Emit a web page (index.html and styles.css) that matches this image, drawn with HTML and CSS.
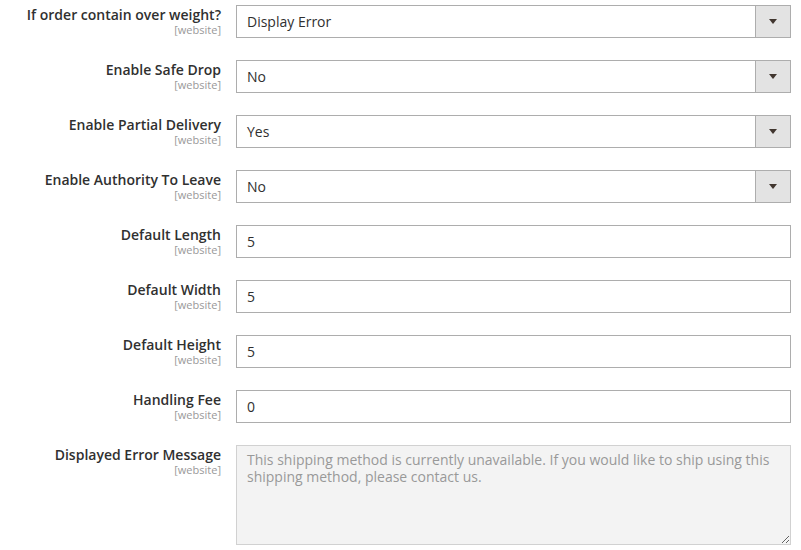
FILE: index.html
```html
<!DOCTYPE html>
<html>
<head>
<meta charset="utf-8">
<link rel="stylesheet" href="styles.css">
</head>
<body>
<div class="form">
  <div class="row">
    <div class="label"><span class="name">If order contain over weight?</span><span class="scope">[website]</span></div>
    <div class="control"><div class="select"><span class="value">Display Error</span><span class="arrow"></span></div></div>
  </div>
  <div class="row">
    <div class="label"><span class="name">Enable Safe Drop</span><span class="scope">[website]</span></div>
    <div class="control"><div class="select"><span class="value">No</span><span class="arrow"></span></div></div>
  </div>
  <div class="row">
    <div class="label"><span class="name">Enable Partial Delivery</span><span class="scope">[website]</span></div>
    <div class="control"><div class="select"><span class="value">Yes</span><span class="arrow"></span></div></div>
  </div>
  <div class="row">
    <div class="label"><span class="name">Enable Authority To Leave</span><span class="scope">[website]</span></div>
    <div class="control"><div class="select"><span class="value">No</span><span class="arrow"></span></div></div>
  </div>
  <div class="row">
    <div class="label"><span class="name">Default Length</span><span class="scope">[website]</span></div>
    <div class="control"><div class="input">5</div></div>
  </div>
  <div class="row">
    <div class="label"><span class="name">Default Width</span><span class="scope">[website]</span></div>
    <div class="control"><div class="input">5</div></div>
  </div>
  <div class="row">
    <div class="label"><span class="name">Default Height</span><span class="scope">[website]</span></div>
    <div class="control"><div class="input">5</div></div>
  </div>
  <div class="row">
    <div class="label"><span class="name">Handling Fee</span><span class="scope">[website]</span></div>
    <div class="control"><div class="input">0</div></div>
  </div>
  <div class="row">
    <div class="label"><span class="name">Displayed Error Message</span><span class="scope">[website]</span></div>
    <div class="control"><textarea class="textarea" readonly>This shipping method is currently unavailable. If you would like to ship using this shipping method, please contact us.</textarea></div>
  </div>
</div>
</body>
</html>
```
FILE: styles.css
```css
html, body {
  margin: 0;
  padding: 0;
  background: #fff;
}
body {
  font-family: "Open Sans", "Liberation Sans", sans-serif;
  color: #303030;
}
.form {
  display: flex;
  flex-direction: column;
  gap: 22px;
  padding: 5px 10px 0 0;
}
.row {
  display: grid;
  grid-template-columns: 221px 1fr;
  column-gap: 15px;
}
.label {
  display: flex;
  flex-direction: column;
  align-items: flex-end;
  text-align: right;
  padding-top: 1px;
}
.name {
  font-size: 14px;
  font-weight: 600;
  line-height: 17px;
  color: #303030;
}
.scope {
  font-size: 11px;
  line-height: 14px;
  color: #999;
}
.select, .input {
  box-sizing: border-box;
  height: 33px;
  border: 1px solid #adadad;
  background: #fff;
  font-size: 14px;
  line-height: 31px;
  color: #303030;
  display: flex;
}
.input {
  padding: 0 10px;
}
.select .value {
  flex: 1;
  padding: 0 10px;
}
.arrow {
  width: 34px;
  border-left: 1px solid #adadad;
  background: #e3e3e3;
  display: flex;
  align-items: center;
  justify-content: center;
}
.arrow::after {
  content: "";
  width: 0;
  height: 0;
  border-left: 4px solid transparent;
  border-right: 4px solid transparent;
  border-top: 5px solid #41362f;
}
.textarea {
  display: block;
  box-sizing: border-box;
  width: 100%;
  height: 100px;
  margin: 0;
  border: 1px solid #d1d1d1;
  background: #f3f3f3;
  color: #999;
  font-family: "Open Sans", "Liberation Sans", sans-serif;
  font-size: 14px;
  line-height: 17px;
  padding: 5px 10px;
  outline: none;
}
```
